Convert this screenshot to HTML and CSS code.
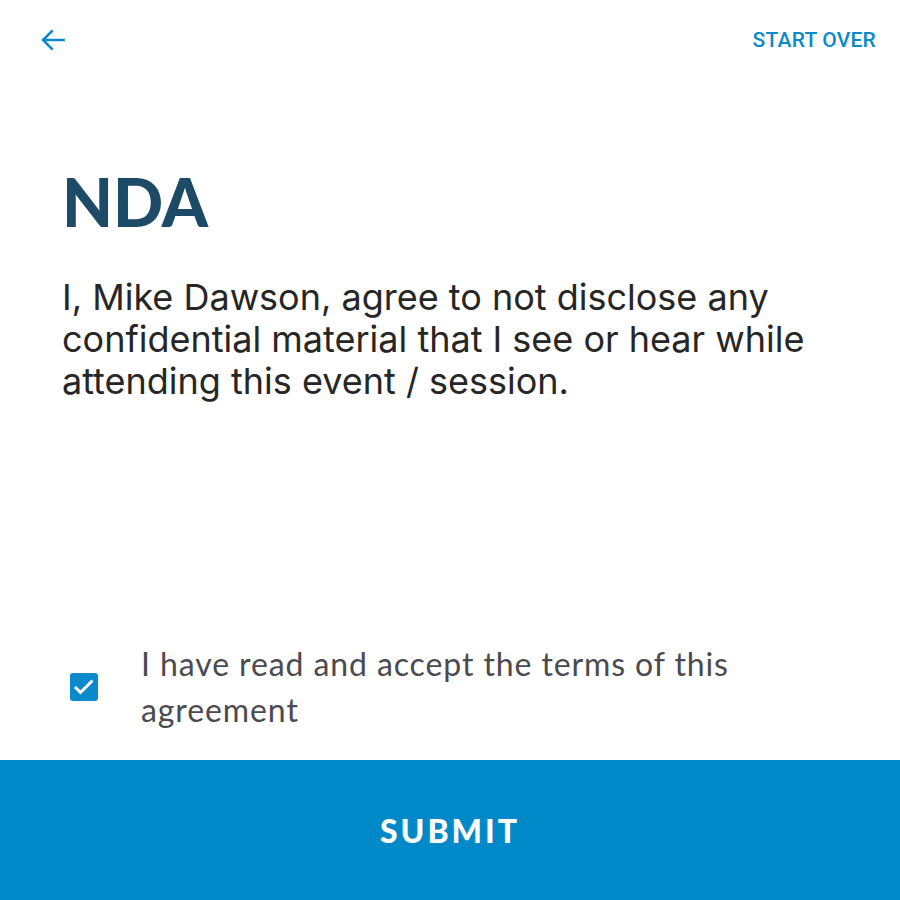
FILE: index.html
```html
<!DOCTYPE html>
<html lang="en">
  <head>
    <meta charset="UTF-8" />
    <title>NDA</title>
    <link rel="stylesheet" href="styles.css">
  </head>
  <body>
    <div class="page">
      <div class="top-bar">
        <button class="back" aria-label="Back">
          <svg width="30" height="30" viewBox="0 0 24 24">
            <path d="M20.5 12H4.5M11 5l-7 7 7 7" fill="none" stroke="#0a8acb" stroke-width="2" stroke-linecap="square"/>
          </svg>
        </button>
        <a class="start-over" href="#">START OVER</a>
      </div>
      <div class="content">
        <h1>NDA</h1>
        <p class="terms">I, Mike Dawson, agree to not disclose any confidential material that I see or hear while attending this event / session.</p>
      </div>
      <label class="accept">
        <span class="checkbox">
          <svg class="tick" width="28" height="28" viewBox="0 0 28 28">
            <path d="M5 14l5.5 5.5 12-12" fill="none" stroke="white" stroke-width="3"/>
          </svg>
        </span>
        <span class="accept-text">I have read and accept the terms of this agreement</span>
      </label>
      <button class="submit">SUBMIT</button>
    </div>
  </body>
</html>
```

FILE: styles.css
```css
* {
  box-sizing: border-box;
}
body {
  margin: 0;
  background: white;
  font-family: Inter, sans-serif;
}
.page {
  height: 900px;
  display: flex;
  flex-direction: column;
}
.top-bar {
  display: flex;
  justify-content: space-between;
  align-items: center;
  padding: 24px 24px 0 38px;
  height: 56px;
}
.back {
  background: none;
  border: none;
  padding: 0;
  display: flex;
}
.start-over {
  font-family: Roboto, sans-serif;
  font-weight: 500;
  font-size: 21px;
  color: #0a8acb;
  text-decoration: none;
  letter-spacing: 0.2px;
}
.content {
  flex: 1;
  padding: 0 62px;
}
h1 {
  font-family: Lato, sans-serif;
  font-weight: 900;
  font-size: 66px;
  color: #1d4a66;
  margin: 106px 0 34px;
  line-height: 80px;
}
.terms {
  font-size: 36px;
  line-height: 42px;
  color: #262626;
  margin: 0;
}
.accept {
  display: flex;
  align-items: center;
  padding: 0 110px 27px 70px;
}
.checkbox {
  width: 28px;
  height: 28px;
  border-radius: 3px;
  background: #0a8acb;
  display: flex;
  flex-shrink: 0;
  margin-right: 43px;
}
.tick {
  flex-shrink: 0;
}
.accept-text {
  font-family: Lato, sans-serif;
  font-size: 32px;
  letter-spacing: 0.9px;
  line-height: 46px;
  color: #4a4a4f;
}
.submit {
  height: 140px;
  border: none;
  background: #0089c8;
  color: white;
  font-family: Lato, sans-serif;
  font-weight: 900;
  font-size: 32px;
  letter-spacing: 3px;
}
```
